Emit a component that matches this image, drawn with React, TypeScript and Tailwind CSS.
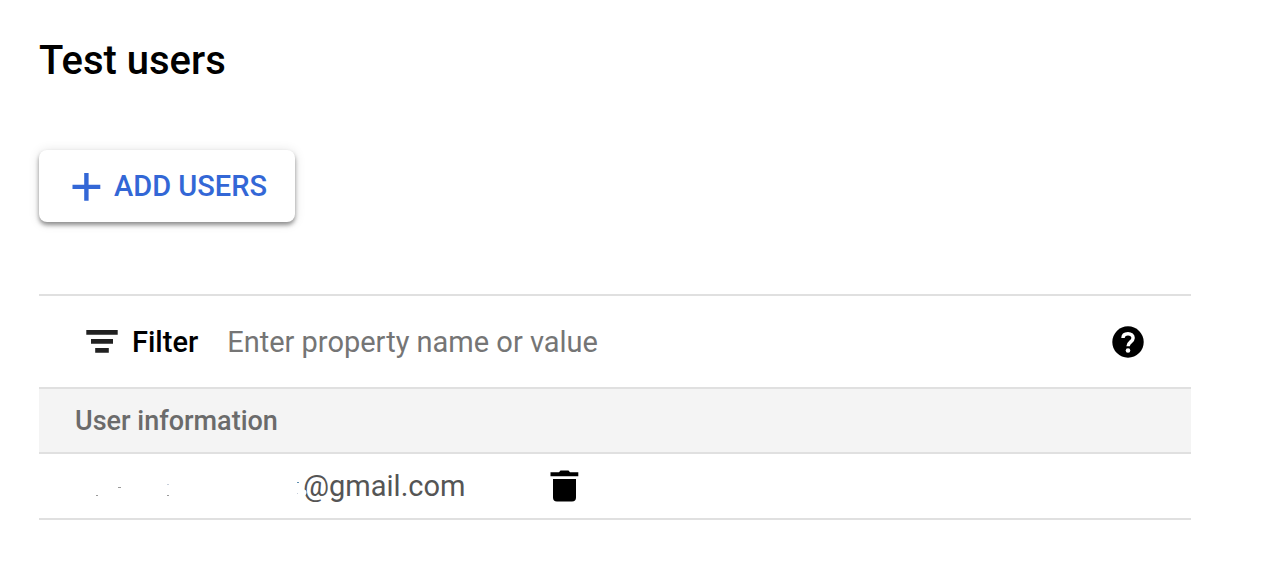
const headers = ["User information"];

function PlusIcon() {
  return (
    <svg viewBox="0 0 28 28" className="size-7 shrink-0 overflow-visible" fill="currentColor" aria-hidden="true">
      <path d="M12.200 0h4.400v11.700h11.700v4.400H16.600V27.800h-4.400V16.100H.5v-4.400h11.700z" />
    </svg>
  );
}

function FilterIcon() {
  return (
    <svg viewBox="0 0 32 24" className="h-6 w-8 shrink-0" fill="#212121" aria-hidden="true">
      <path d="M.3 0h31.400v4.700H.3zM5 9h22v4.700H5zM9.200 18h13.600v4.700H9.200z" />
    </svg>
  );
}

function HelpIcon() {
  return (
    <svg viewBox="0 0 32 32" className="size-8" aria-hidden="true">
      <circle cx="16" cy="16" r="15.700" fill="currentColor" />
      <path
        d="M11 12C11 9.200 13 7.700 16 7.700s5.100 1.600 5.100 4.300c0 3.700-5 4.200-5 8.200"
        fill="none"
        stroke="#fff"
        strokeWidth="3.500"
      />
      <circle cx="16" cy="24.500" r="2.300" fill="#fff" />
    </svg>
  );
}

function TrashIcon() {
  return (
    <svg viewBox="0 0 28 32" className="h-8 w-7 overflow-visible" fill="currentColor" aria-hidden="true">
      <path d="M.5 2.300H9L10.500.6h8L20 2.300h8.300v4H.5zM3 9h23v18.500q0 4-4 4H7q-4 0-4-4z" />
    </svg>
  );
}

function HiddenName() {
  return (
    <svg viewBox="0 0 228 32" className="relative h-8 w-57 shrink-0 overflow-visible" aria-hidden="true">
      <path fill="#9a9a9a" d="M21 25h2v1h-2zM43 17h3v1h-3zM92 25h2v1h-2z" />
      <path fill="#c8d0dc" d="M92 14h2v1h-2zM222 23h1v1h-1z" />
      <path fill="#5f8fb0" d="M222 12h2v1h-2z" />
      <circle cx="228.500" cy="22.500" r="3" fill="#fff" />
    </svg>
  );
}

export default function App() {
  return (
    <main className="bg-white pt-[37px] pr-[75px] pb-11 pl-[39px] font-[Roboto,sans-serif] text-black">
      <h1 className="text-[40px] leading-12 font-medium">Test users</h1>

      <button
        type="button"
        className="mt-[65px] flex h-18 items-center gap-3.5 rounded-lg bg-white pt-px pr-7 pl-[33px] text-[29px] font-medium text-[#3367d6] shadow-[0_3px_4px_rgba(0,0,0,0.4),0_1px_12px_rgba(0,0,0,0.12)]"
      >
        <PlusIcon />
        ADD USERS
      </button>

      <section className="mt-18 border-t-2 border-[#e0e0e0]">
        <div className="flex h-[91px] items-center px-[47px]">
          <label htmlFor="filter" className="flex items-center gap-3.5 text-[29px] font-medium">
            <FilterIcon />
            <span className="pt-0.5">Filter</span>
          </label>
          <input
            id="filter"
            type="text"
            placeholder="Enter property name or value"
            className="ml-[29px] min-w-0 flex-1 pt-0.5 text-[29px] text-[#616161] outline-none placeholder:text-[#757575]"
          />
          <button type="button" aria-label="Help">
            <HelpIcon />
          </button>
        </div>

        <table className="w-full border-collapse text-left">
          <thead>
            <tr className="h-[65px] border-y-2 border-[#e0e0e0] bg-[#f4f4f4]">
              {headers.map((header) => (
                <th key={header} scope="col" className="pt-0.5 pl-9 text-[27px] font-medium text-[#6b6b6b]">
                  {header}
                </th>
              ))}
            </tr>
          </thead>
          <tbody>
            <tr className="h-[66px] border-b-2 border-[#e0e0e0]">
              <td className="pl-9">
                <div className="flex items-center text-[29px] text-[#555555]">
                  <HiddenName />
                  <span className="pt-0.5">@gmail.com</span>
                  <button type="button" aria-label="Delete user" className="ml-[85px] text-black">
                    <TrashIcon />
                  </button>
                </div>
              </td>
            </tr>
          </tbody>
        </table>
      </section>
    </main>
  );
}
